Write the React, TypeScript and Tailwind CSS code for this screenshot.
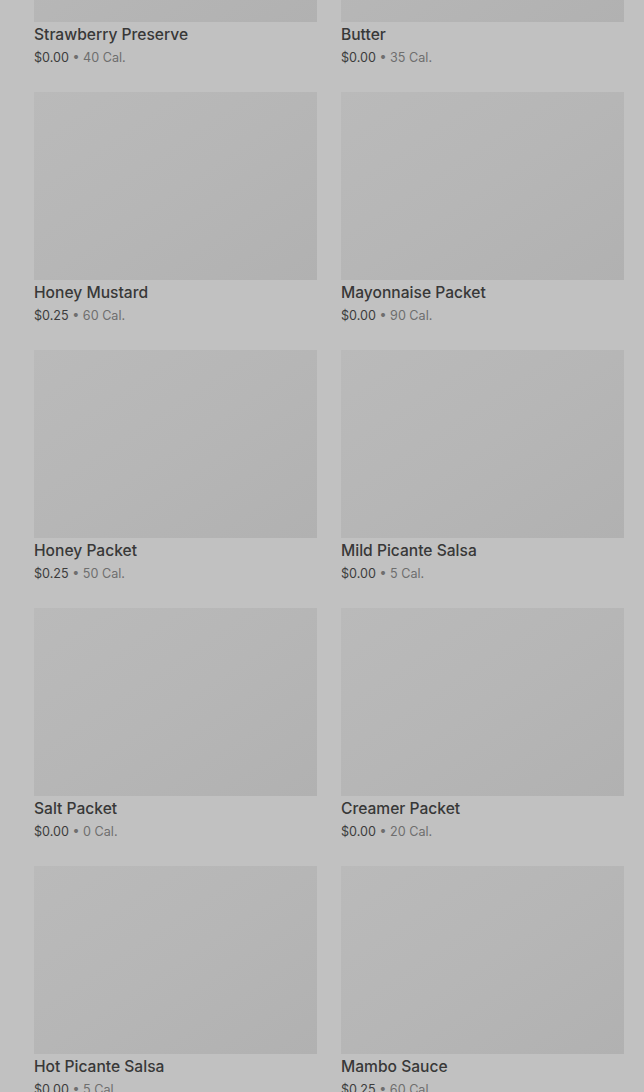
const items = [
  { name: "Strawberry Preserve", price: "$0.00", cal: "40 Cal." },
  { name: "Butter", price: "$0.00", cal: "35 Cal." },
  { name: "Honey Mustard", price: "$0.25", cal: "60 Cal." },
  { name: "Mayonnaise Packet", price: "$0.00", cal: "90 Cal." },
  { name: "Honey Packet", price: "$0.25", cal: "50 Cal." },
  { name: "Mild Picante Salsa", price: "$0.00", cal: "5 Cal." },
  { name: "Salt Packet", price: "$0.00", cal: "0 Cal." },
  { name: "Creamer Packet", price: "$0.00", cal: "20 Cal." },
  { name: "Hot Picante Salsa", price: "$0.00", cal: "5 Cal." },
  { name: "Mambo Sauce", price: "$0.25", cal: "60 Cal." },
];

function ItemCard({ name, price, cal }: { name: string; price: string; cal: string }) {
  return (
    <div className="flex flex-col">
      <div className="h-[188px] bg-gradient-to-br from-[#bababa] via-[#b6b6b6] to-[#b1b1b1]" />
      <div className="mt-[2px] text-[15.6px] leading-[22px] font-medium text-[#383838]">{name}</div>
      <div className="mt-[1px] text-[12.6px] leading-[22px] text-[#6e6e6e]">
        <span className="text-[#3c3c3c]">{price}</span> • {cal}
      </div>
    </div>
  );
}

export default function App() {
  return (
    <div className="h-[1092px] overflow-hidden bg-[#c1c1c1] font-['Inter',sans-serif]">
      <div className="mt-[-166px] grid grid-cols-2 gap-x-6 gap-y-[23px] pl-[34px] pr-[20px]">
        {items.map((it) => (
          <ItemCard key={it.name} {...it} />
        ))}
      </div>
    </div>
  );
}
